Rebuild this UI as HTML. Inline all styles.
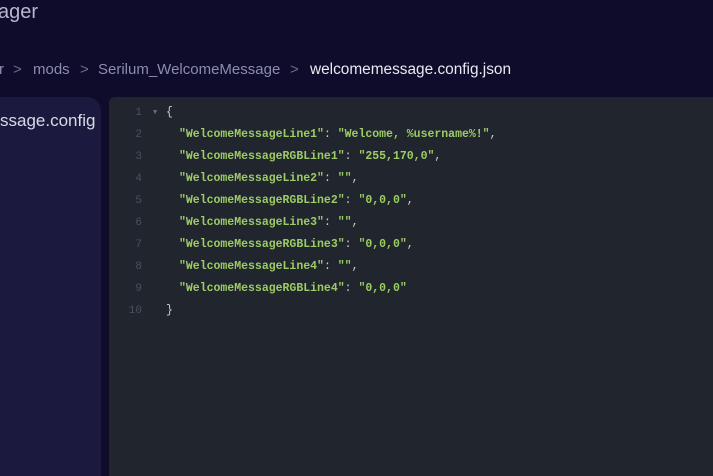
<!DOCTYPE html>
<html><head><style>
html,body{margin:0;width:713px;height:476px;overflow:hidden}
body{background:#0e0c2a;position:relative;font-family:"Liberation Sans",sans-serif}
.title{position:absolute;left:-2px;top:1px;font-size:20px;color:#b4b6cc}
.cr{position:absolute;top:61px;font-size:15px;color:#8a8db0;white-space:nowrap}
.sep{color:#6a6c8a}
.cr.b{color:#e8e9f2}
.side{position:absolute;left:-20px;top:97px;width:121px;height:379px;background:#1b1a3e;border-radius:0 14px 0 0}
.side div{position:absolute;left:20px;top:14px;font-size:17px;color:#d8d9e6}
.ed{position:absolute;left:109px;top:97px;width:604px;height:379px;background:#21252d;border-radius:6px 0 0 0;font-family:"Liberation Mono",monospace;font-size:11.5px}
.ln{position:absolute;left:0;width:33px;text-align:right;color:#4b5060;font-size:11px}
.c{position:absolute;left:57px;color:#9ccc65;white-space:pre;font-weight:bold}
.p{color:#c8ccd4;font-weight:normal}
.arr{position:absolute;left:44px;top:12px;color:#6b7080;font-size:7px}
</style></head><body>
<div class="title">ager</div>
<div class="cr" style="left:-1px">r</div>
<div class="cr sep" style="left:13px">&gt;</div>
<div class="cr" style="left:33px">mods</div>
<div class="cr sep" style="left:80px">&gt;</div>
<div class="cr" style="left:98px">Serilum_WelcomeMessage</div>
<div class="cr sep" style="left:290px">&gt;</div>
<div class="cr b" style="left:310px;font-size:15.4px">welcomemessage.config.json</div>
<div class="side"><div>ssage.config</div></div>
<div class="ed">
<div class="arr">▼</div>
<div class="ln" style="top:10px">1</div><div class="c p" style="top:9px">{</div>
<div class="ln" style="top:32px">2</div><div class="c" style="top:31px;left:70px">"WelcomeMessageLine1"<span class="p">: </span>"Welcome, %username%!"<span class="p">,</span></div>
<div class="ln" style="top:54px">3</div><div class="c" style="top:53px;left:70px">"WelcomeMessageRGBLine1"<span class="p">: </span>"255,170,0"<span class="p">,</span></div>
<div class="ln" style="top:76px">4</div><div class="c" style="top:75px;left:70px">"WelcomeMessageLine2"<span class="p">: </span>""<span class="p">,</span></div>
<div class="ln" style="top:98px">5</div><div class="c" style="top:97px;left:70px">"WelcomeMessageRGBLine2"<span class="p">: </span>"0,0,0"<span class="p">,</span></div>
<div class="ln" style="top:120px">6</div><div class="c" style="top:119px;left:70px">"WelcomeMessageLine3"<span class="p">: </span>""<span class="p">,</span></div>
<div class="ln" style="top:142px">7</div><div class="c" style="top:141px;left:70px">"WelcomeMessageRGBLine3"<span class="p">: </span>"0,0,0"<span class="p">,</span></div>
<div class="ln" style="top:164px">8</div><div class="c" style="top:163px;left:70px">"WelcomeMessageLine4"<span class="p">: </span>""<span class="p">,</span></div>
<div class="ln" style="top:186px">9</div><div class="c" style="top:185px;left:70px">"WelcomeMessageRGBLine4"<span class="p">: </span>"0,0,0"</div>
<div class="ln" style="top:208px">10</div><div class="c p" style="top:207px">}</div>
</div>
</body></html>
